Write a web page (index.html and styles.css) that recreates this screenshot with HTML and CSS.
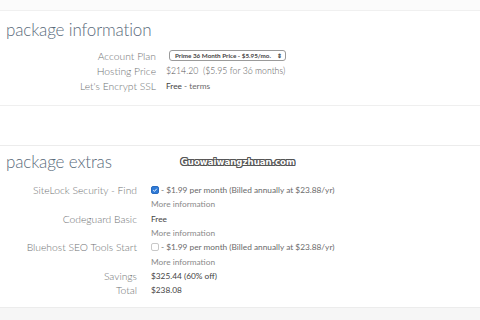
FILE: index.html
```html
<!DOCTYPE html>
<html>
<head>
<meta charset="utf-8">
<link rel="stylesheet" href="styles.css">
</head>
<body>
<div class="page">
  <div class="topband"></div>
  <section class="card card-info">
    <h2 class="title">package information</h2>
    <div class="grid grid-info">
      <div class="label">Account Plan</div>
      <div class="value"><span class="select">Prime 36 Month Price - $5.95/mo. <span class="arrows">&#8661;</span></span></div>
      <div class="label">Hosting Price</div>
      <div class="value light">$214.20&nbsp; ($5.95 for 36 months)</div>
      <div class="label">Let's Encrypt SSL</div>
      <div class="value small"><span class="dark">Free</span>&nbsp;- terms</div>
    </div>
  </section>
  <div class="gap"></div>
  <section class="card card-extras">
    <div class="title-row">
      <h2 class="title">package extras</h2>
      <span class="watermark">Guowaiwangzhuan.com</span>
    </div>
    <div class="grid grid-extras">
      <div class="label">SiteLock Security - Find</div>
      <div class="value small"><span class="cb checked"><svg viewBox="0 0 8 8" width="8" height="8"><path d="M1.6 4.2 L3.3 5.8 L6.4 2.3" fill="none" stroke="#fff" stroke-width="1.2"/></svg></span>- $1.99 per month (Billed annually at $23.88/yr)</div>
      <div class="label"></div>
      <div class="value small more">More information</div>
      <div class="label">Codeguard Basic</div>
      <div class="value small dark">Free</div>
      <div class="label"></div>
      <div class="value small more">More information</div>
      <div class="label">Bluehost SEO Tools Start</div>
      <div class="value small"><span class="cb"></span>- $1.99 per month (Billed annually at $23.88/yr)</div>
      <div class="label"></div>
      <div class="value small more">More information</div>
      <div class="label">Savings</div>
      <div class="value small dark">$325.44 (60% off)</div>
      <div class="label">Total</div>
      <div class="value small dark">$238.08</div>
    </div>
  </section>
  <div class="bottomband"></div>
</div>
</body>
</html>
```
FILE: styles.css
```css
* { box-sizing: border-box; }
html, body { margin: 0; padding: 0; }
body {
  width: 480px;
  height: 320px;
  overflow: hidden;
  background: #fbfbfb;
  font-family: Lato, "Open Sans", sans-serif;
  color: #6b6f74;
}
.page { display: flex; flex-direction: column; height: 320px; }
.topband { height: 11px; background: #fbfbfb; border-bottom: 1px solid #f0f0f0; }
.card { background: #fff; }
.card-info { height: 94px; padding: 8px 0 0 6px; }
.gap { height: 41px; background: #fff; border-top: 1px solid #efefef; border-bottom: 1px solid #ececec; }
.card-extras { height: 162px; padding: 5px 0 0 6px; border-bottom: 1px solid #ececec; }
.bottomband { flex: 1; background: #f6f6f6; }
.title {
  margin: 0;
  font-weight: 300;
  font-size: 17px;
  line-height: 22px;
  color: #5b6b7b;
  letter-spacing: -0.15px;
}
.title-row { display: flex; align-items: center; }
.watermark {
  margin-left: 69px;
  font-family: "DejaVu Sans", sans-serif;
  font-weight: bold;
  font-size: 8.6px;
  color: #fff;
  letter-spacing: 0;
  text-shadow: 1px 0 0 #555, -1px 0 0 #555, 0 1px 0 #555, 0 -1px 0 #555, 1px 1px 0 #555, -1px -1px 0 #555, 1px -1px 0 #555, -1px 1px 0 #555;
}
.grid { display: grid; align-items: center; }
.grid-info { grid-template-columns: 150px auto; column-gap: 10px; grid-auto-rows: 15px; margin-top: 7px; }
.grid-extras { grid-template-columns: 131px auto; column-gap: 14px; grid-auto-rows: 14.3px; margin-top: 10px; }
.label {
  text-align: right;
  font-weight: 300;
  font-size: 10.3px;
  color: #707274;
  white-space: nowrap;
}
.value { font-size: 9px; color: #666; white-space: nowrap; display: flex; align-items: center; }
.value.light { font-size: 8.7px; font-weight: 300; color: #555; }
.value.small { font-size: 8.3px; color: #6a6a6a; font-weight: 400; }
.value.more { color: #8a8a8a; }
.dark { color: #444; font-weight: 400; }
.value.dark { color: #444; }
.select {
  display: inline-flex;
  align-items: center;
  height: 11px;
  padding: 0 3px 0 5px;
  margin-left: 3px;
  border: 1px solid #9a9a9a;
  border-radius: 3px;
  font-size: 6.3px;
  font-weight: 700;
  color: #444;
  width: 117px;
}
.arrows { margin-left: auto; font-size: 6px; }
.cb {
  display: inline-flex;
  align-items: center;
  justify-content: center;
  width: 8px;
  height: 8px;
  border: 1px solid #c8c8c8;
  border-radius: 2px;
  margin-right: 2px;
  background: #fff;
}
.cb.checked { background: #2f7bd8; border-color: #2a6cc0; }
```
